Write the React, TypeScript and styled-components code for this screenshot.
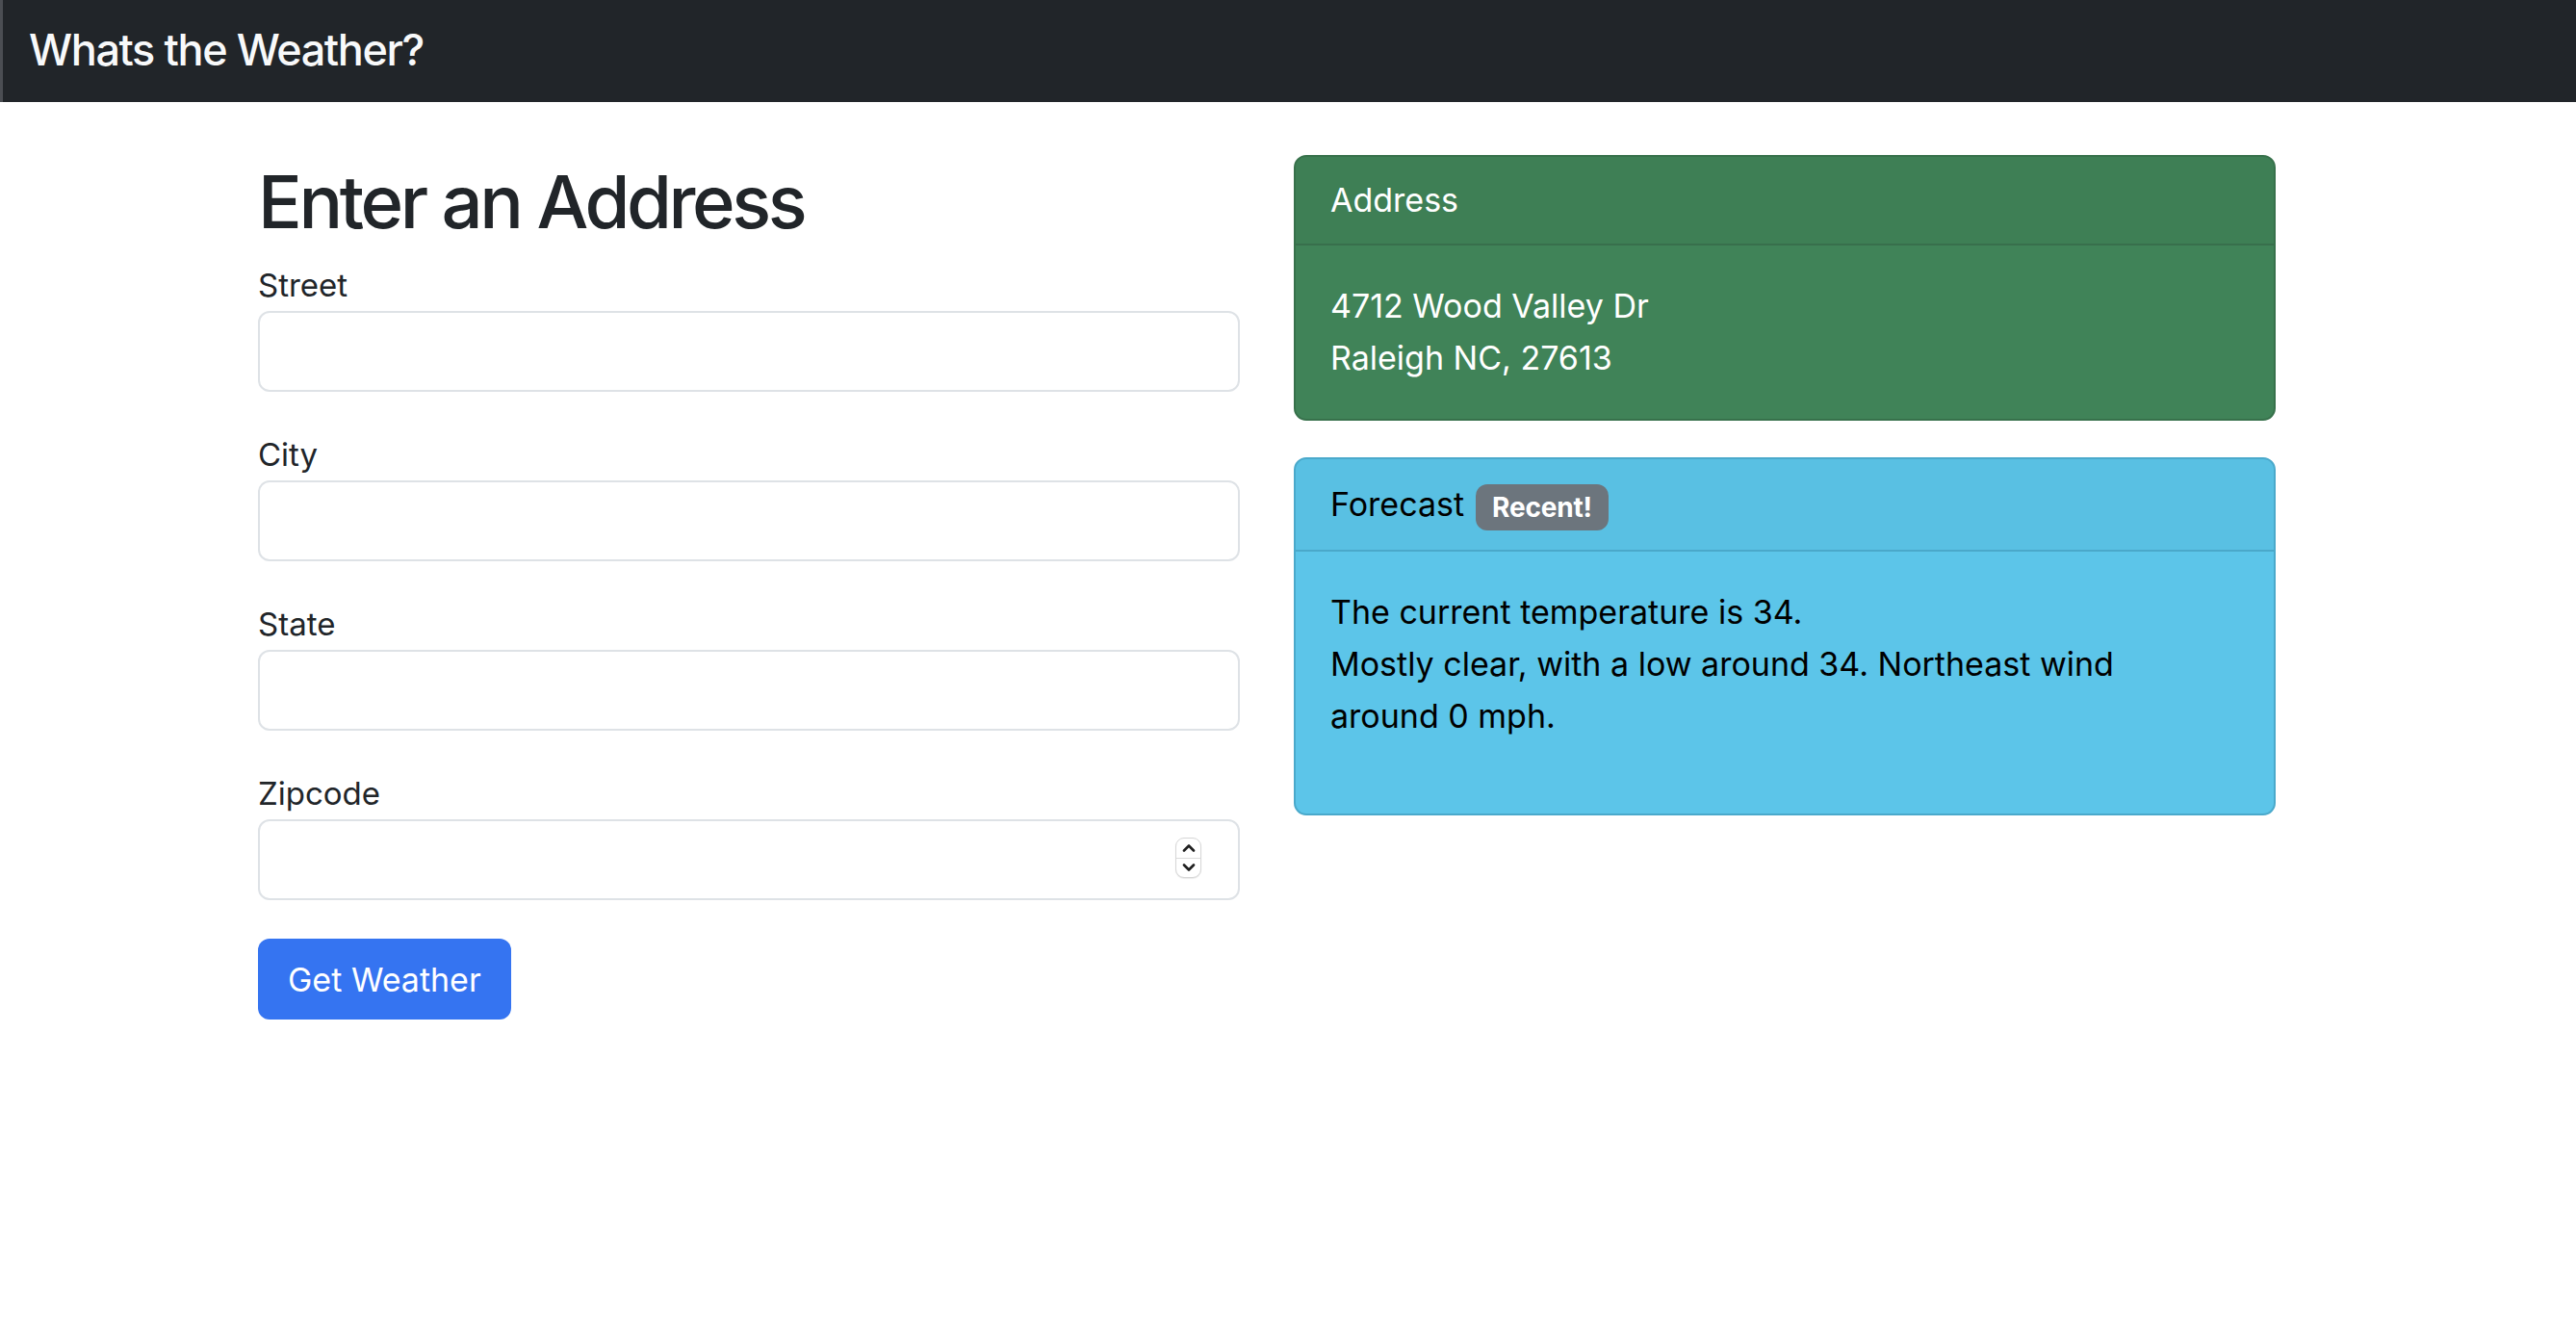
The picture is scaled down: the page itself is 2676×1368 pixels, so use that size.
import React from 'react'
import styled, { createGlobalStyle } from 'styled-components'

// ── Global ─────────────────────────────────────────────────────────

const GlobalStyle = createGlobalStyle`
  html, body {
    margin: 0;
    padding: 0;
    background: #fff;
  }
  body {
    font-family: Inter, "Noto Sans", "Liberation Sans", sans-serif;
    color: #212529;
  }
  * { box-sizing: border-box; }
`

// ── Styled ─────────────────────────────────────────────────────────

const Navbar = styled.nav`
  height: 106px;
  display: flex;
  align-items: center;
  padding-left: 27px;
  background: #212529;
  border-left: 3px solid #4b4e53;
`

const Brand = styled.span`
  margin-top: -4px;
  font-size: 45px;
  font-weight: 500;
  line-height: 1;
  color: #f8f9fa;
  letter-spacing: -1.4px;
`

const Main = styled.main`
  display: grid;
  grid-template-columns: 1020px 1020px;
  column-gap: 56px;
  align-items: start;
  padding: 55px 0 0 268px;
`

const FormColumn = styled.form`
  display: flex;
  flex-direction: column;
  align-items: flex-start;
`

const Heading = styled.h1`
  margin: 3px 0 17px;
  font-size: 76px;
  font-weight: 500;
  line-height: 1.2;
  letter-spacing: -3.4px;
  color: #212529;
`

const FieldGroup = styled.div`
  width: 100%;
  display: flex;
  flex-direction: column;
  & + & { margin-top: 41px; }
`

const Label = styled.label`
  margin-bottom: 3px;
  font-size: 33px;
  line-height: 48px;
  color: #212529;
`

const InputWrap = styled.div`
  position: relative;
  width: 100%;
`

const Input = styled.input`
  display: block;
  width: 100%;
  height: 84px;
  padding: 0 24px;
  border: 2px solid #dee2e6;
  border-radius: 12px;
  background: #fff;
  font-family: inherit;
  font-size: 33px;
  color: #212529;
  &:focus { outline: none; border-color: #86b7fe; }
`

const Stepper = styled.div`
  position: absolute;
  right: 40px;
  top: 19px;
  width: 27px;
  height: 42px;
  display: flex;
  flex-direction: column;
  border: 1px solid #d6d6d6;
  border-radius: 9px;
  background: #fff;
  box-shadow: 0 1px 1px rgba(0, 0, 0, 0.08);
  overflow: hidden;
`

const StepHalf = styled.div<{ $top?: boolean }>`
  flex: 1;
  display: flex;
  align-items: center;
  justify-content: center;
  border-bottom: ${(p) => (p.$top ? '1px solid #dcdcdc' : 'none')};
`

const Button = styled.button`
  margin-top: 40px;
  height: 84px;
  padding: 0 31px;
  border: none;
  border-radius: 12px;
  background: #3574f1;
  color: #fff;
  font-family: inherit;
  font-size: 34px;
  font-weight: 400;
  cursor: pointer;
`

const CardColumn = styled.div`
  display: flex;
  flex-direction: column;
  gap: 38px;
`

type Variant = 'success' | 'info'

const palette: Record<Variant, { bg: string; border: string; divider: string; text: string }> = {
  success: { bg: '#408358', border: '#37714b', divider: '#386f4c', text: '#ffffff' },
  info: { bg: '#5cc5e9', border: '#4aa9cb', divider: '#4aa8ca', text: '#000000' },
}

const Card = styled.section<{ $variant: Variant }>`
  border: 2px solid ${(p) => palette[p.$variant].border};
  border-radius: 13px;
  background: ${(p) => palette[p.$variant].bg};
  color: ${(p) => palette[p.$variant].text};
  overflow: hidden;
`

const CardHeader = styled.div<{ $variant: Variant }>`
  display: flex;
  align-items: center;
  gap: 12px;
  padding: 20px 36px;
  font-size: 34px;
  line-height: 50px;
  background: rgba(0, 0, 0, 0.025);
  border-bottom: 2px solid ${(p) => palette[p.$variant].divider};
`

const CardBody = styled.div<{ $extra?: number }>`
  padding: 36px 36px ${(p) => 36 + (p.$extra ?? 0)}px;
  font-size: 34px;
  line-height: 54px;
`

const Badge = styled.span`
  margin-top: 6px;
  padding: 10px 17px;
  border-radius: 12px;
  background: #6c757d;
  color: #fff;
  font-size: 28px;
  font-weight: 700;
  line-height: 28px;
  letter-spacing: -0.2px;
`

// ── Components ─────────────────────────────────────────────────────

function Chevron({ up }: { up?: boolean }) {
  return (
    <svg width="14" height="9" viewBox="0 0 14 9">
      <path
        d={up ? 'M2 7.5 L7 2.5 L12 7.5' : 'M2 1.5 L7 6.5 L12 1.5'}
        fill="none"
        stroke="#1f1f1f"
        strokeWidth="2.6"
        strokeLinecap="round"
        strokeLinejoin="round"
      />
    </svg>
  )
}

function Field({ label, stepper }: { label: string; stepper?: boolean }) {
  const id = label.toLowerCase()
  return (
    <FieldGroup>
      <Label htmlFor={id}>{label}</Label>
      <InputWrap>
        <Input id={id} type="text" inputMode={stepper ? 'numeric' : undefined} />
        {stepper && (
          <Stepper>
            <StepHalf $top><Chevron up /></StepHalf>
            <StepHalf><Chevron /></StepHalf>
          </Stepper>
        )}
      </InputWrap>
    </FieldGroup>
  )
}

export default function App() {
  return (
    <>
      <GlobalStyle />
      <Navbar>
        <Brand>Whats the Weather?</Brand>
      </Navbar>
      <Main>
        <FormColumn onSubmit={(e) => e.preventDefault()}>
          <Heading>Enter an Address</Heading>
          <Field label="Street" />
          <Field label="City" />
          <Field label="State" />
          <Field label="Zipcode" stepper />
          <Button type="submit">Get Weather</Button>
        </FormColumn>

        <CardColumn>
          <Card $variant="success">
            <CardHeader $variant="success">Address</CardHeader>
            <CardBody>
              4712 Wood Valley Dr
              <br />
              Raleigh NC, 27613
            </CardBody>
          </Card>

          <Card $variant="info">
            <CardHeader $variant="info">
              Forecast
              <Badge>Recent!</Badge>
            </CardHeader>
            <CardBody $extra={38}>
              The current temperature is 34.
              <br />
              Mostly clear, with a low around 34. Northeast wind
              <br />
              around 0 mph.
            </CardBody>
          </Card>
        </CardColumn>
      </Main>
    </>
  )
}
